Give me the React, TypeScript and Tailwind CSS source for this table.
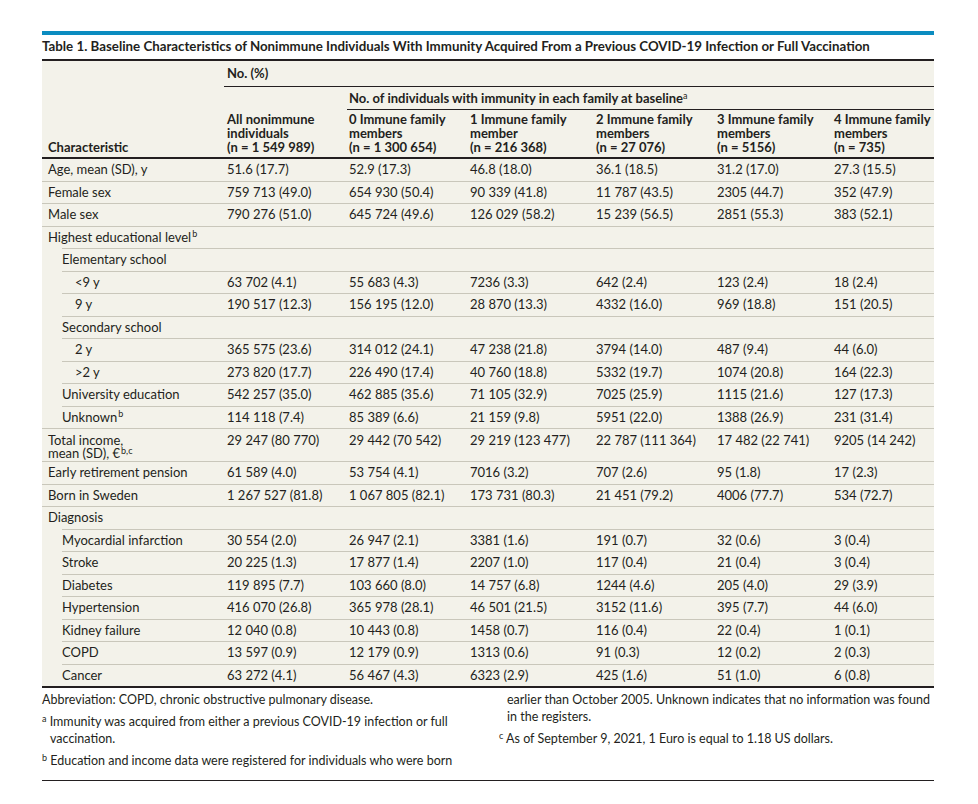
const NBSP = '\u00a0';

// digit groups are kept together with a non-breaking space
function fmt(value: string) {
  return value.replace(/(\d) (?=\d)/g, `$1${NBSP}`);
}

interface Row {
  label: string;
  sup?: string;
  label2?: string;
  level: 0 | 1 | 2;
  values?: string[];
  // draw the separator from the indent instead of the full width
  indentLine?: boolean;
}

const ROWS: Row[] = [
  {label: 'Age, mean (SD), y', level: 0, values: ['51.6 (17.7)', '52.9 (17.3)', '46.8 (18.0)', '36.1 (18.5)', '31.2 (17.0)', '27.3 (15.5)']},
  {label: 'Female sex', level: 0, values: ['759 713 (49.0)', '654 930 (50.4)', '90 339 (41.8)', '11 787 (43.5)', '2305 (44.7)', '352 (47.9)']},
  {label: 'Male sex', level: 0, values: ['790 276 (51.0)', '645 724 (49.6)', '126 029 (58.2)', '15 239 (56.5)', '2851 (55.3)', '383 (52.1)']},
  {label: 'Highest educational level', sup: 'b', level: 0, indentLine: true},
  {label: 'Elementary school', level: 1, indentLine: true},
  {label: '<9 y', level: 2, indentLine: true, values: ['63 702 (4.1)', '55 683 (4.3)', '7236 (3.3)', '642 (2.4)', '123 (2.4)', '18 (2.4)']},
  {label: '9 y', level: 2, indentLine: true, values: ['190 517 (12.3)', '156 195 (12.0)', '28 870 (13.3)', '4332 (16.0)', '969 (18.8)', '151 (20.5)']},
  {label: 'Secondary school', level: 1, indentLine: true},
  {label: '2 y', level: 2, indentLine: true, values: ['365 575 (23.6)', '314 012 (24.1)', '47 238 (21.8)', '3794 (14.0)', '487 (9.4)', '44 (6.0)']},
  {label: '>2 y', level: 2, indentLine: true, values: ['273 820 (17.7)', '226 490 (17.4)', '40 760 (18.8)', '5332 (19.7)', '1074 (20.8)', '164 (22.3)']},
  {label: 'University education', level: 1, indentLine: true, values: ['542 257 (35.0)', '462 885 (35.6)', '71 105 (32.9)', '7025 (25.9)', '1115 (21.6)', '127 (17.3)']},
  {label: 'Unknown', sup: 'b', level: 1, values: ['114 118 (7.4)', '85 389 (6.6)', '21 159 (9.8)', '5951 (22.0)', '1388 (26.9)', '231 (31.4)']},
  {label: 'Total income,', label2: 'mean (SD), €', sup: 'b,c', level: 0, values: ['29 247 (80 770)', '29 442 (70 542)', '29 219 (123 477)', '22 787 (111 364)', '17 482 (22 741)', '9205 (14 242)']},
  {label: 'Early retirement pension', level: 0, values: ['61 589 (4.0)', '53 754 (4.1)', '7016 (3.2)', '707 (2.6)', '95 (1.8)', '17 (2.3)']},
  {label: 'Born in Sweden', level: 0, values: ['1 267 527 (81.8)', '1 067 805 (82.1)', '173 731 (80.3)', '21 451 (79.2)', '4006 (77.7)', '534 (72.7)']},
  {label: 'Diagnosis', level: 0, indentLine: true},
  {label: 'Myocardial infarction', level: 1, indentLine: true, values: ['30 554 (2.0)', '26 947 (2.1)', '3381 (1.6)', '191 (0.7)', '32 (0.6)', '3 (0.4)']},
  {label: 'Stroke', level: 1, indentLine: true, values: ['20 225 (1.3)', '17 877 (1.4)', '2207 (1.0)', '117 (0.4)', '21 (0.4)', '3 (0.4)']},
  {label: 'Diabetes', level: 1, indentLine: true, values: ['119 895 (7.7)', '103 660 (8.0)', '14 757 (6.8)', '1244 (4.6)', '205 (4.0)', '29 (3.9)']},
  {label: 'Hypertension', level: 1, indentLine: true, values: ['416 070 (26.8)', '365 978 (28.1)', '46 501 (21.5)', '3152 (11.6)', '395 (7.7)', '44 (6.0)']},
  {label: 'Kidney failure', level: 1, indentLine: true, values: ['12 040 (0.8)', '10 443 (0.8)', '1458 (0.7)', '116 (0.4)', '22 (0.4)', '1 (0.1)']},
  {label: 'COPD', level: 1, indentLine: true, values: ['13 597 (0.9)', '12 179 (0.9)', '1313 (0.6)', '91 (0.3)', '12 (0.2)', '2 (0.3)']},
  {label: 'Cancer', level: 1, values: ['63 272 (4.1)', '56 467 (4.3)', '6323 (2.9)', '425 (1.6)', '51 (1.0)', '6 (0.8)']},
];

const GROUP_HEADS = [
  {lines: ['0 Immune family', 'members', '(n = 1 300 654)'], w: 'w-[121px]'},
  {lines: ['1 Immune family', 'member', '(n = 216 368)'], w: 'w-[126px]'},
  {lines: ['2 Immune family', 'members', '(n = 27 076)'], w: 'w-[121px]'},
  {lines: ['3 Immune family', 'members', '(n = 5156)'], w: 'w-[117px]'},
  {lines: ['4 Immune family', 'members', '(n = 735)'], w: 'flex-1'},
];

function TableHeader() {
  return (
    <div className="flex border-b-2 border-[#231f20] font-bold leading-[14px]">
      {/* Characteristic column, aligned to the bottom */}
      <div className="w-[180px] flex items-end pl-[6px] pb-[3px]">Characteristic</div>

      <div className="flex-1 flex flex-col">
        {/* No. (%) spanner */}
        <div className="ml-[2px] border-b border-[#231f20] pl-[3px] pt-[5px] pb-[6px]">No. (%)</div>

        <div className="flex">
          <div className="w-[122px] flex items-end pl-[5px] pb-[3px]">
            <div>
              All nonimmune
              <br />
              individuals
              <br />
              {fmt('(n = 1 549 989)')}
            </div>
          </div>

          <div className="flex-1 flex flex-col">
            <div className="ml-[3px] border-b border-[#231f20] pl-[2px] pt-[4px] pb-[4px]">
              No. of individuals with immunity in each family at baseline
              <sup className="text-[9px] font-normal">a</sup>
            </div>
            <div className="flex pt-[2px] pb-[3px]">
              {GROUP_HEADS.map((h) => (
                <div key={h.lines[0]} className={`${h.w} pl-[5px]`}>
                  {h.lines.map((l) => (
                    <div key={l}>{fmt(l)}</div>
                  ))}
                </div>
              ))}
            </div>
          </div>
        </div>
      </div>
    </div>
  );
}

function TableRow({row, last}: {row: Row; last: boolean}) {
  const indent = row.level === 2 ? 'pl-[33px]' : row.level === 1 ? 'pl-[20px]' : 'pl-[6px]';
  const tall = !!row.label2;
  const vals = row.values ?? ['', '', '', '', '', ''];

  return (
    <>
      <div
        className={`grid grid-cols-[180px_122px_121px_126px_121px_117px_1fr] ${
          tall ? 'h-[32px] pt-[5px] leading-[13px]' : 'h-[21.5px] pt-[3px] leading-[14px]'
        }`}
      >
        <div className={indent}>
          {row.label}
          {row.label2 && (
            <>
              <br />
              {row.label2}
            </>
          )}
          {row.sup && <sup className="text-[9px] ml-[1px]">{row.sup}</sup>}
        </div>
        {vals.map((v, i) => (
          <div key={i} className="pl-[5px] whitespace-nowrap">
            {fmt(v)}
          </div>
        ))}
      </div>
      {last ? (
        <div className="h-[2px] bg-[#231f20]" />
      ) : (
        <div className={`h-px bg-[#c9c7bb] ${row.indentLine ? 'ml-[20px]' : ''}`} />
      )}
    </>
  );
}

export default function App() {
  return (
    <div
      className="min-h-[804px] bg-white pl-[42px] pt-[31px] text-[13px] text-[#231f20]"
      style={{fontFamily: 'Lato, "Liberation Sans", sans-serif'}}
    >
      <div className="w-[892px]">
        {/* Blue top rule */}
        <div className="h-[4px] bg-[#0b8cc0]" />

        {/* Title */}
        <div className="pt-[3px] pb-[5px] leading-[16px] text-[13.3px] font-bold border-b-2 border-[#231f20]">
          Table 1. Baseline Characteristics of Nonimmune Individuals With Immunity Acquired From a Previous COVID-19 Infection or Full Vaccination
        </div>

        {/* Table body */}
        <div className="bg-[#f3f2ea]">
          <TableHeader />
          {ROWS.map((row, i) => (
            <TableRow key={row.label} row={row} last={i === ROWS.length - 1} />
          ))}
        </div>

        {/* Footnotes */}
        <div className="grid grid-cols-[430px_1fr] gap-[25px] pt-[3px] text-[12.5px] leading-[17px] border-b border-[#231f20] pb-[11px]">
          <div>
            <p className="mb-[5px]">Abbreviation: COPD, chronic obstructive pulmonary disease.</p>
            <p className="mb-[5px] pl-[8px] -indent-[8px]">
              <sup className="text-[9px]">a</sup> Immunity was acquired from either a previous COVID-19 infection or full
              <br />
              vaccination.
            </p>
            <p className="pl-[8px] -indent-[8px]">
              <sup className="text-[9px]">b</sup> Education and income data were registered for individuals who were born
            </p>
          </div>
          <div>
            <p className="mb-[5px] pl-[10px]">
              earlier than October 2005. Unknown indicates that no information was found
              <br />
              in the registers.
            </p>
            <p className="pl-[10px] -indent-[8px]">
              <sup className="text-[9px]">c</sup> As of September 9, 2021, 1 Euro is equal to 1.18 US dollars.
            </p>
          </div>
        </div>
      </div>
    </div>
  );
}
